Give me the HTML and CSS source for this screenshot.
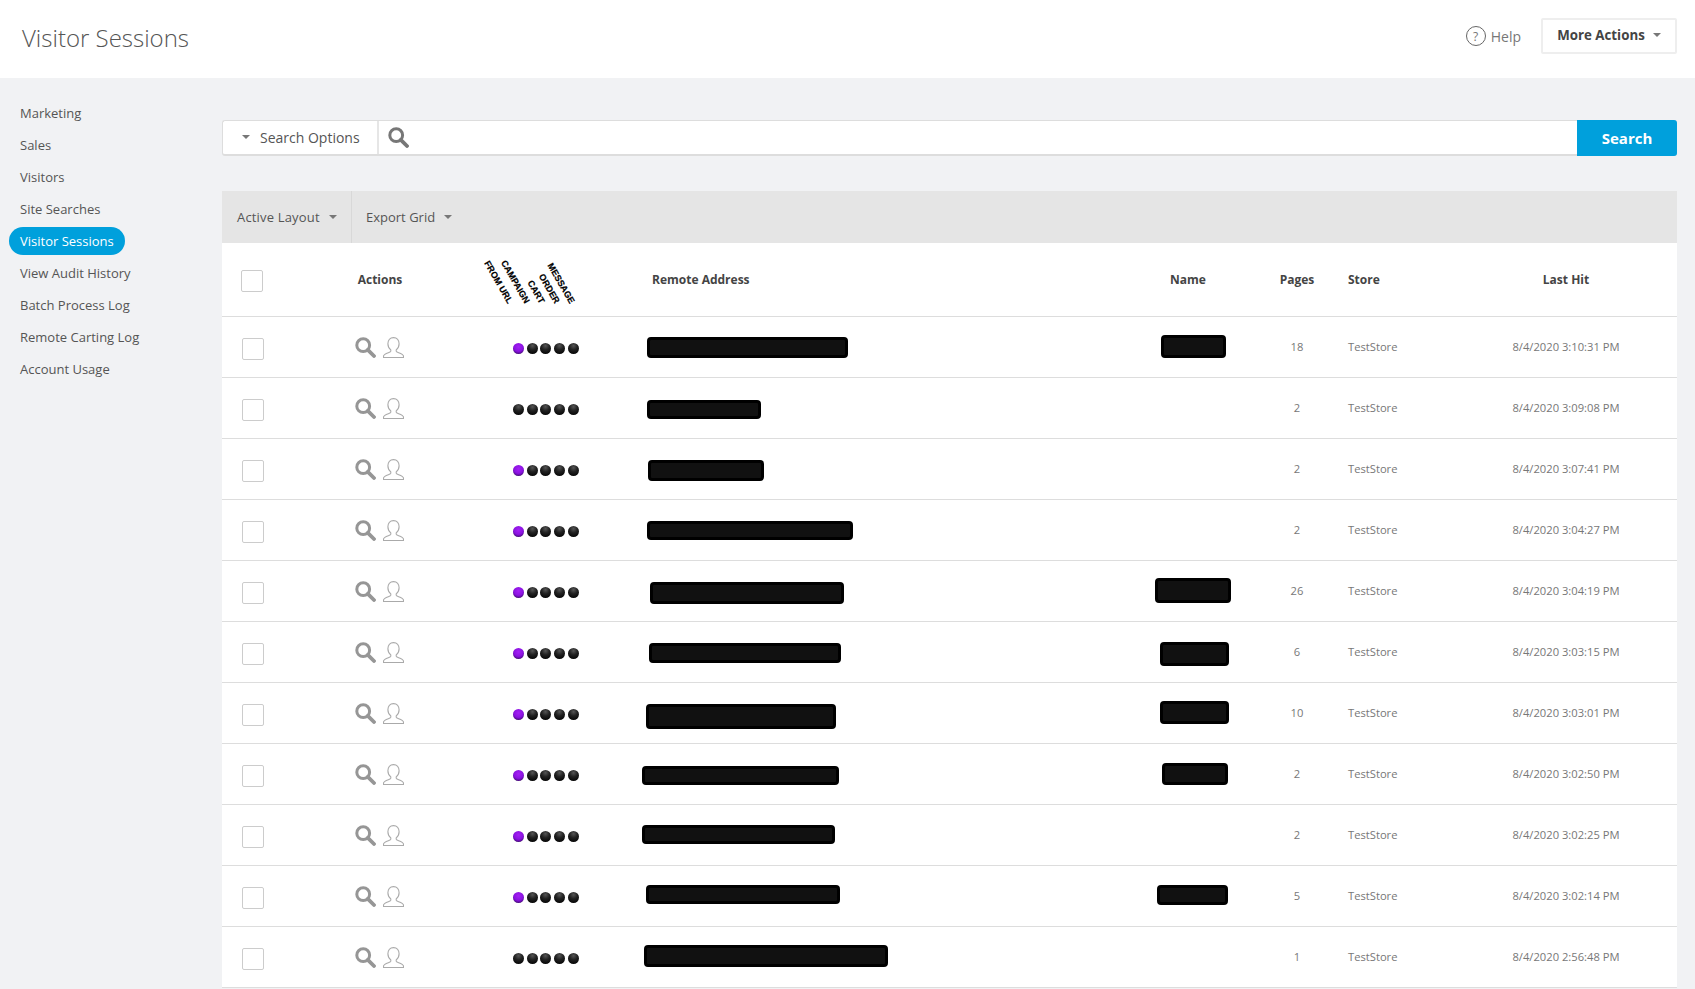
FILE: index.html
```html
<!DOCTYPE html>
<html lang="en">
<head>
<meta charset="utf-8">
<title>Visitor Sessions</title>
<link rel="stylesheet" href="styles.css">
</head>
<body>
<svg class="defs" aria-hidden="true">
  <symbol id="mag" viewBox="0 0 21 21"><circle cx="8.2" cy="8.2" r="6.4" fill="none" stroke="currentColor" stroke-width="3"/><path d="M12.8 12.8 L19 19" fill="none" stroke="currentColor" stroke-width="3.8" stroke-linecap="round"/></symbol>
  <symbol id="user" viewBox="0 0 21 21"><path d="M10.5 .6C7 .6 4.9 3.3 4.9 6.8c0 2.7 1.3 4.8 2.9 6.1v1.4c0 1.3-7.3 1.8-7.3 5v1.2h20v-1.2c0-3.2-7.3-3.7-7.3-5v-1.4c1.6-1.3 2.9-3.4 2.9-6.1 0-3.5-2.1-6.2-5.6-6.2z" fill="none" stroke="currentColor" stroke-width="1.1"/></symbol>
</svg>
<header class="top">
  <h1 class="title">Visitor Sessions</h1>
  <div class="top-actions">
    <a class="help"><span class="help-icon">?</span>Help</a>
    <button class="more">More Actions<i class="caret"></i></button>
  </div>
</header>
<div class="main">
  <nav class="side">
    <a>Marketing</a>
    <a>Sales</a>
    <a>Visitors</a>
    <a>Site Searches</a>
    <a class="active">Visitor Sessions</a>
    <a>View Audit History</a>
    <a>Batch Process Log</a>
    <a>Remote Carting Log</a>
    <a>Account Usage</a>
  </nav>
  <section class="content">
    <div class="search">
      <div class="search-opts"><i class="caret"></i>Search Options</div>
      <div class="search-field"><svg class="search-mag"><use href="#mag"/></svg></div>
      <button class="search-btn">Search</button>
    </div>
    <div class="toolbar">
      <div class="tool first">Active Layout<i class="caret"></i></div>
      <div class="tool">Export Grid<i class="caret"></i></div>
    </div>
    <table class="grid">
      <colgroup><col class="c1"><col class="c2"><col class="c3"><col class="c4"><col class="c5"><col class="c6"><col class="c7"><col class="c8"></colgroup>
      <thead>
        <tr>
          <th class="chk"><span class="box head-box"></span></th>
          <th class="ctr">Actions</th>
          <th class="rot-cell">
            <b class="rot a1"><span>FROM URL</span></b>
            <b class="rot a2"><span>CAMPAIGN</span></b>
            <b class="rot a3"><span>CART</span></b>
            <b class="rot a4"><span>ORDER</span></b>
            <b class="rot a5"><span>MESSAGE</span></b>
          </th>
          <th class="addr">Remote Address</th>
          <th class="ctr">Name</th>
          <th class="ctr">Pages</th>
          <th class="store">Store</th>
          <th class="ctr">Last Hit</th>
        </tr>
      </thead>
      <tbody>
        <tr><td class="chk"><span class="box"></span></td><td class="ctr"><svg class="ic mag"><use href="#mag"/></svg><svg class="ic user"><use href="#user"/></svg></td><td class="dots"><i class="dot on"></i><i class="dot"></i><i class="dot"></i><i class="dot"></i><i class="dot"></i></td><td class="addr"><span class="red r1"></span></td><td class="ctr"><span class="red n1"></span></td><td class="ctr">18</td><td class="store">TestStore</td><td class="ctr">8/4/2020 3:10:31 PM</td></tr>
        <tr><td class="chk"><span class="box"></span></td><td class="ctr"><svg class="ic mag"><use href="#mag"/></svg><svg class="ic user"><use href="#user"/></svg></td><td class="dots"><i class="dot"></i><i class="dot"></i><i class="dot"></i><i class="dot"></i><i class="dot"></i></td><td class="addr"><span class="red r2"></span></td><td class="ctr"></td><td class="ctr">2</td><td class="store">TestStore</td><td class="ctr">8/4/2020 3:09:08 PM</td></tr>
        <tr><td class="chk"><span class="box"></span></td><td class="ctr"><svg class="ic mag"><use href="#mag"/></svg><svg class="ic user"><use href="#user"/></svg></td><td class="dots"><i class="dot on"></i><i class="dot"></i><i class="dot"></i><i class="dot"></i><i class="dot"></i></td><td class="addr"><span class="red r3"></span></td><td class="ctr"></td><td class="ctr">2</td><td class="store">TestStore</td><td class="ctr">8/4/2020 3:07:41 PM</td></tr>
        <tr><td class="chk"><span class="box"></span></td><td class="ctr"><svg class="ic mag"><use href="#mag"/></svg><svg class="ic user"><use href="#user"/></svg></td><td class="dots"><i class="dot on"></i><i class="dot"></i><i class="dot"></i><i class="dot"></i><i class="dot"></i></td><td class="addr"><span class="red r4"></span></td><td class="ctr"></td><td class="ctr">2</td><td class="store">TestStore</td><td class="ctr">8/4/2020 3:04:27 PM</td></tr>
        <tr><td class="chk"><span class="box"></span></td><td class="ctr"><svg class="ic mag"><use href="#mag"/></svg><svg class="ic user"><use href="#user"/></svg></td><td class="dots"><i class="dot on"></i><i class="dot"></i><i class="dot"></i><i class="dot"></i><i class="dot"></i></td><td class="addr"><span class="red r5"></span></td><td class="ctr"><span class="red n5"></span></td><td class="ctr">26</td><td class="store">TestStore</td><td class="ctr">8/4/2020 3:04:19 PM</td></tr>
        <tr><td class="chk"><span class="box"></span></td><td class="ctr"><svg class="ic mag"><use href="#mag"/></svg><svg class="ic user"><use href="#user"/></svg></td><td class="dots"><i class="dot on"></i><i class="dot"></i><i class="dot"></i><i class="dot"></i><i class="dot"></i></td><td class="addr"><span class="red r6"></span></td><td class="ctr"><span class="red n6"></span></td><td class="ctr">6</td><td class="store">TestStore</td><td class="ctr">8/4/2020 3:03:15 PM</td></tr>
        <tr><td class="chk"><span class="box"></span></td><td class="ctr"><svg class="ic mag"><use href="#mag"/></svg><svg class="ic user"><use href="#user"/></svg></td><td class="dots"><i class="dot on"></i><i class="dot"></i><i class="dot"></i><i class="dot"></i><i class="dot"></i></td><td class="addr"><span class="red r7"></span></td><td class="ctr"><span class="red n7"></span></td><td class="ctr">10</td><td class="store">TestStore</td><td class="ctr">8/4/2020 3:03:01 PM</td></tr>
        <tr><td class="chk"><span class="box"></span></td><td class="ctr"><svg class="ic mag"><use href="#mag"/></svg><svg class="ic user"><use href="#user"/></svg></td><td class="dots"><i class="dot on"></i><i class="dot"></i><i class="dot"></i><i class="dot"></i><i class="dot"></i></td><td class="addr"><span class="red r8"></span></td><td class="ctr"><span class="red n8"></span></td><td class="ctr">2</td><td class="store">TestStore</td><td class="ctr">8/4/2020 3:02:50 PM</td></tr>
        <tr><td class="chk"><span class="box"></span></td><td class="ctr"><svg class="ic mag"><use href="#mag"/></svg><svg class="ic user"><use href="#user"/></svg></td><td class="dots"><i class="dot on"></i><i class="dot"></i><i class="dot"></i><i class="dot"></i><i class="dot"></i></td><td class="addr"><span class="red r9"></span></td><td class="ctr"></td><td class="ctr">2</td><td class="store">TestStore</td><td class="ctr">8/4/2020 3:02:25 PM</td></tr>
        <tr><td class="chk"><span class="box"></span></td><td class="ctr"><svg class="ic mag"><use href="#mag"/></svg><svg class="ic user"><use href="#user"/></svg></td><td class="dots"><i class="dot on"></i><i class="dot"></i><i class="dot"></i><i class="dot"></i><i class="dot"></i></td><td class="addr"><span class="red r10"></span></td><td class="ctr"><span class="red n10"></span></td><td class="ctr">5</td><td class="store">TestStore</td><td class="ctr">8/4/2020 3:02:14 PM</td></tr>
        <tr><td class="chk"><span class="box"></span></td><td class="ctr"><svg class="ic mag"><use href="#mag"/></svg><svg class="ic user"><use href="#user"/></svg></td><td class="dots"><i class="dot"></i><i class="dot"></i><i class="dot"></i><i class="dot"></i><i class="dot"></i></td><td class="addr"><span class="red r11"></span></td><td class="ctr"></td><td class="ctr">1</td><td class="store">TestStore</td><td class="ctr">8/4/2020 2:56:48 PM</td></tr>
      </tbody>
    </table>
  </section>
</div>
</body>
</html>
```

FILE: styles.css
```css
* { box-sizing: border-box; }
html, body { margin: 0; height: 100%; overflow: hidden; }
body { background: #f1f2f4; font-family: "Open Sans", "Liberation Sans", sans-serif; color: #555; font-size: 13px; }
.defs { width: 0; height: 0; display: block; }

.top { height: 78px; background: #fff; display: flex; align-items: center; justify-content: space-between; padding: 0 18px 0 22px; }
.title { margin: 0 0 4px; font-size: 24px; font-weight: 300; color: #555; }
.top-actions { display: flex; align-items: center; margin-bottom: 7px; }
.help { display: flex; align-items: center; font-size: 14px; color: #777; margin-right: 20px; padding-top: 1px; }
.help-icon { width: 20px; height: 20px; border: 1px solid #666; border-radius: 50%; display: flex; align-items: center; justify-content: center; font-size: 12px; margin-right: 5px; }
.more { width: 136px; height: 36px; background: #fff; border: 2px solid #eee; border-radius: 2px; font: 700 13.3px "Open Sans", sans-serif; color: #444; display: flex; align-items: center; justify-content: center; padding: 0 0 2px; }
.more .caret { margin-left: 8px; }

.caret { display: inline-block; width: 0; height: 0; border-left: 4px solid transparent; border-right: 4px solid transparent; border-top: 4px solid #777; }

.main { display: flex; align-items: flex-start; }
.side { width: 222px; flex: none; padding: 19px 0 0 9px; display: flex; flex-direction: column; align-items: flex-start; }
.side a { height: 28px; line-height: 28px; margin: 2px 0; padding: 0 11px; border-radius: 14px; color: #555; white-space: nowrap; }
.side a.active { background: #00a0dc; color: #fff; }

.content { flex: 1; min-width: 0; margin-right: 18px; padding-top: 42px; }
.search { display: flex; height: 36px; background: #fff; border: 1px solid #ddd; border-bottom-width: 2px; border-right: 0; border-radius: 3px; }
.search-opts { width: 156px; flex: none; display: flex; align-items: center; padding-left: 19px; font-size: 14px; color: #555; border-right: 2px solid #e6e6e6; }
.search-opts .caret { margin-right: 10px; margin-top: -2px; }
.search-field { flex: 1; display: flex; align-items: center; padding-left: 9px; }
.search-mag { width: 21px; height: 21px; color: #777; }
.search-btn { width: 100px; margin: -1px 0 -2px; border: 0; background: #00a0dc; color: #fff; font: 700 15px "Open Sans", sans-serif; border-radius: 0 3px 3px 0; padding: 0; }

.toolbar { display: flex; height: 52px; margin-top: 35px; background: #e5e5e5; }
.tool { display: flex; align-items: center; font-size: 13px; padding: 0 15px 0 14px; color: #555; white-space: nowrap; }
.tool .caret { margin-left: 9px; }
.tool.first { width: 130px; padding-left: 15px; border-right: 1px solid #d8d8d8; letter-spacing: .17px; }

.grid { width: 100%; table-layout: fixed; border-collapse: collapse; background: #fff; }
.c1 { width: 78px; } .c2 { width: 160px; } .c3 { width: 180px; } .c4 { width: 480px; }
.c5 { width: 136px; } .c6 { width: 82px; } .c7 { width: 117px; } .c8 { width: 222px; }
.grid th { height: 73px; padding: 0; font-size: 12px; font-weight: 700; color: #444; border-bottom: 1px solid #ddd; text-align: left; }
.grid td { height: 61px; padding: 0; font-size: 11.2px; color: #777; border-bottom: 1px solid #ddd; position: relative; }
.grid .ctr { text-align: center; }
.chk { padding-left: 20px !important; }
th.chk { padding-left: 19px !important; }
.box { display: block; width: 22px; height: 22px; border: 1px solid #ccc; border-radius: 2px; background: #fff; margin-top: 4px; }
.head-box { margin-top: 3px; }
.addr { padding-left: 12px !important; }
.store { padding-left: 10px !important; }

.ic { width: 21px; height: 21px; vertical-align: middle; position: relative; top: 1px; }
.ic.mag { color: #969696; margin: 0 7px 0 -1px; }
.ic.user { color: #aaa; }

.dots { padding: 4px 0 0 53px !important; white-space: nowrap; font-size: 0 !important; }
.dot { display: inline-block; width: 11px; height: 11px; margin-right: 2.7px; border-radius: 50%; background: radial-gradient(circle at 50% 25%, #555 0, #222 40%, #080808 80%); }
.dot.on { background: radial-gradient(circle at 50% 35%, #a420f5 0, #8a12e0 50%, #5a0c9a 72%, #0a0a0a 92%); }

.rot-cell { position: relative; }
.rot { position: absolute; top: 60px; width: 0; height: 0; }
.rot span { position: absolute; left: 0; top: 0; white-space: nowrap; font: 700 9px/11px "Liberation Sans", Arial, sans-serif; color: #000; -webkit-text-stroke: .2px #000; transform-origin: 100% 50%; transform: translate(-100%, -50%) rotate(60deg); }
.a1 { left: 50px; } .a2 { left: 67px; } .a3 { left: 82px; } .a4 { left: 97px; } .a5 { left: 112px; }

.red { position: absolute; background: #111; border: 3px solid #000; border-radius: 4px; }
.r1 { left: 7px; top: 20px; width: 201px; height: 21px; }
.r2 { left: 7px; top: 22px; width: 114px; height: 19px; }
.r3 { left: 8px; top: 21px; width: 116px; height: 21px; }
.r4 { left: 7px; top: 21px; width: 206px; height: 19px; }
.r5 { left: 10px; top: 21px; width: 194px; height: 22px; }
.r6 { left: 9px; top: 21px; width: 192px; height: 20px; }
.r7 { left: 6px; top: 21px; width: 190px; height: 25px; }
.r8 { left: 2px; top: 22px; width: 197px; height: 19px; }
.r9 { left: 2px; top: 20px; width: 193px; height: 19px; }
.r10 { left: 6px; top: 19px; width: 194px; height: 19px; }
.r11 { left: 4px; top: 18px; width: 244px; height: 22px; }
.n1 { left: 41px; top: 18px; width: 65px; height: 23px; }
.n5 { left: 35px; top: 17px; width: 76px; height: 25px; }
.n6 { left: 40px; top: 20px; width: 69px; height: 24px; }
.n7 { left: 40px; top: 18px; width: 69px; height: 23px; }
.n8 { left: 42px; top: 19px; width: 66px; height: 22px; }
.n10 { left: 37px; top: 19px; width: 71px; height: 20px; }
```
